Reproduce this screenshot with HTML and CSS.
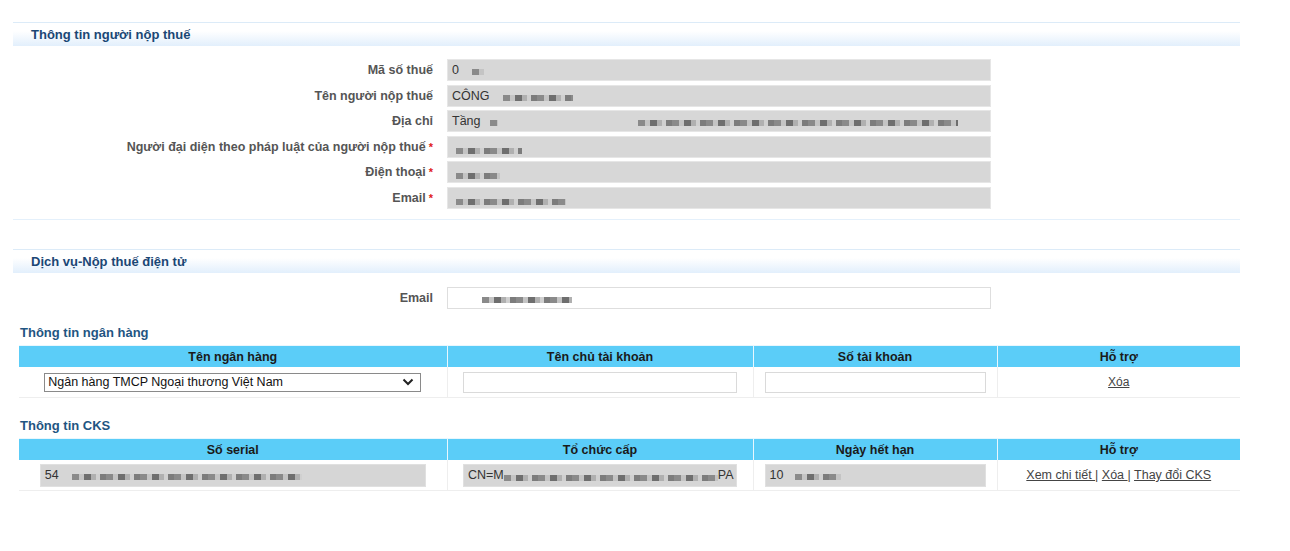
FILE: index.html
```html
<!DOCTYPE html>
<html lang="vi">
<head>
    <meta charset="UTF-8">
    <meta name="viewport" content="width=device-width, initial-scale=1.0">
    <title>Thông tin người nộp thuế</title>
    <link rel="stylesheet" href="styles.css">
</head>
<body>
    <div class="page">
        <div class="section boxed">
            <div class="section-head">Thông tin người nộp thuế</div>
            <div class="form">
                <div class="row">
                    <label>Mã số thuế</label>
                    <div class="field ro">0 <span class="px w12 off"></span></div>
                </div>
                <div class="row">
                    <label>Tên người nộp thuế</label>
                    <div class="field ro">CÔNG <span class="px w70 off"></span></div>
                </div>
                <div class="row">
                    <label>Địa chỉ</label>
                    <div class="field ro">Tầng <span class="px w8"></span><span class="px long"></span></div>
                </div>
                <div class="row">
                    <label>Người đại diện theo pháp luật của người nộp thuế<span class="req">*</span></label>
                    <div class="field ro"><span class="px w66 first"></span></div>
                </div>
                <div class="row">
                    <label>Điện thoại<span class="req">*</span></label>
                    <div class="field ro"><span class="px w44 first"></span></div>
                </div>
                <div class="row">
                    <label>Email<span class="req">*</span></label>
                    <div class="field ro"><span class="px w110 first"></span></div>
                </div>
            </div>
        </div>

        <div class="section">
            <div class="section-head">Dịch vụ-Nộp thuế điện tử</div>
            <div class="form email-form">
                <div class="row">
                    <label>Email</label>
                    <div class="field"><span class="px w90 mail"></span></div>
                </div>
            </div>

            <div class="sub-title">Thông tin ngân hàng</div>
            <table class="grid">
                <thead>
                    <tr>
                        <th class="c1">Tên ngân hàng</th>
                        <th class="c2">Tên chủ tài khoản</th>
                        <th class="c3">Số tài khoản</th>
                        <th class="c4">Hỗ trợ</th>
                    </tr>
                </thead>
                <tbody>
                    <tr>
                        <td>
                            <div class="select">
                                <span>Ngân hàng TMCP Ngoại thương Việt Nam</span>
                                <svg width="12" height="8" viewBox="0 0 12 8"><path d="M1.5 1.5 L6 6 L10.5 1.5" fill="none" stroke="#222" stroke-width="2"/></svg>
                            </div>
                        </td>
                        <td><div class="input name"></div></td>
                        <td><div class="input acc"></div></td>
                        <td><a href="#" class="link">Xóa</a></td>
                    </tr>
                </tbody>
            </table>

            <div class="sub-title cks">Thông tin CKS</div>
            <table class="grid">
                <thead>
                    <tr>
                        <th class="c1">Số serial</th>
                        <th class="c2">Tổ chức cấp</th>
                        <th class="c3">Ngày hết hạn</th>
                        <th class="c4">Hỗ trợ</th>
                    </tr>
                </thead>
                <tbody>
                    <tr>
                        <td><div class="input gray serial">54 <span class="px w200"></span></div></td>
                        <td><div class="input gray name">CN=M<span class="px w214 tight"></span>PA</div></td>
                        <td><div class="input gray acc">10 <span class="px w46"></span></div></td>
                        <td class="links">
                            <a href="#" class="link">Xem chi tiết </a> | <a href="#" class="link">Xóa </a> | <a href="#" class="link">Thay đổi CKS</a>
                        </td>
                    </tr>
                </tbody>
            </table>
        </div>
    </div>
</body>
</html>
```

FILE: styles.css
```css
* {
    margin: 0;
    padding: 0;
    box-sizing: border-box;
}

body {
    font-family: 'Liberation Sans', Arial, sans-serif;
    font-size: 12px;
    color: #333;
    background: #fff;
}

.page {
    padding: 22px 0 40px 13px;
    width: 1240px;
}

.section.boxed {
    border-bottom: 1px solid #e4f0fb;
    margin-bottom: 29px;
}

.section-head {
    height: 24px;
    line-height: 23px;
    padding-left: 18px;
    border-top: 1px solid #dcebf8;
    background: linear-gradient(#ffffff 35%, #e2effc);
    font-weight: bold;
    font-size: 13px;
    color: #1b4775;
}

.form {
    display: flex;
    flex-direction: column;
    gap: 3.6px;
    padding: 13px 0 10px;
}

.email-form {
    padding: 14px 0 0;
}

.row {
    display: flex;
    align-items: center;
    height: 22px;
}

.row label {
    width: 420px;
    text-align: right;
    font-weight: bold;
    font-size: 12.5px;
    color: #555;
}

.req {
    color: #e02020;
    margin-left: 3px;
    font-size: 11px;
}

.field {
    margin-left: 14px;
    width: 544px;
    height: 22px;
    line-height: 20px;
    padding: 0 4px;
    border: 1px solid #dedede;
    background: #fff;
    color: #333;
    font-size: 12.5px;
    white-space: nowrap;
    overflow: hidden;
}

.field.ro {
    background: #d7d7d7;
    border-color: #e6e6e6;
}

/* masked values */
.px {
    display: inline-block;
    height: 6px;
    vertical-align: -1px;
    background: repeating-linear-gradient(90deg, #8a8a8a 0 7px, #c4c4c4 7px 12px, #6e6e6e 12px 19px, #b0b0b0 19px 24px, #d0d0d0 24px 28px, #7c7c7c 28px 34px);
}

.px.off { margin-left: 10px; }
.px.first { margin-left: 4px; vertical-align: -3px; }
.px.mail { margin-left: 30px; }
.px.tight { vertical-align: -2px; }

.w8 { width: 8px; margin-left: 6px; }
.w12 { width: 12px; }
.w44 { width: 44px; }
.w46 { width: 46px; margin-left: 8px; }
.w66 { width: 66px; }
.w70 { width: 70px; }
.w90 { width: 90px; }
.w110 { width: 110px; }
.w200 { width: 230px; margin-left: 10px; }
.w214 { width: 214px; }

.px.long {
    width: 320px;
    margin-left: 140px;
}

.sub-title {
    margin: 16px 0 0 7px;
    height: 20px;
    line-height: 16px;
    font-weight: bold;
    font-size: 13px;
    color: #1f5582;
}

.sub-title.cks {
    margin-top: 20px;
}

.grid {
    margin-left: 6px;
    width: 1221px;
    border-collapse: collapse;
    table-layout: fixed;
}

.grid th {
    height: 22px;
    background: #5bcdf8;
    color: #1a1a1a;
    font-weight: bold;
    font-size: 12.5px;
    text-align: center;
    border-left: 1px solid #e8f7fe;
    border-top: 1px solid #e8f7fe;
}

.grid th:first-child,
.grid td:first-child {
    border-left: none;
}

.grid .c1 { width: 428px; }
.grid .c2 { width: 306px; }
.grid .c3 { width: 244px; }
.grid .c4 { width: 243px; }

.grid td {
    height: 30px;
    text-align: center;
    vertical-align: middle;
    border-left: 1px solid #eeeeee;
    border-bottom: 1px solid #eeeeee;
}

.select {
    margin: 0 auto;
    width: 377px;
    height: 19px;
    border: 1px solid #8a8a8a;
    background: #fff;
    display: flex;
    align-items: center;
    justify-content: space-between;
    padding: 0 6px 0 3px;
    font-size: 12.5px;
    color: #111;
    text-align: left;
}

.input {
    margin: 0 auto;
    height: 21px;
    border: 1px solid #dadada;
    background: #fff;
    text-align: left;
    line-height: 19px;
    padding: 0 4px;
    white-space: nowrap;
    overflow: hidden;
    font-size: 12.5px;
}

.input.name { width: 274px; }
.input.acc { width: 221px; }

.input.gray {
    height: 23px;
    line-height: 21px;
    background: #d6d6d6;
    border-color: #e0e0e0;
    color: #333;
}

.input.serial { width: 386px; }

.link {
    color: #444;
    text-decoration: underline;
}

.links {
    color: #444;
    font-size: 12.5px;
}
```
